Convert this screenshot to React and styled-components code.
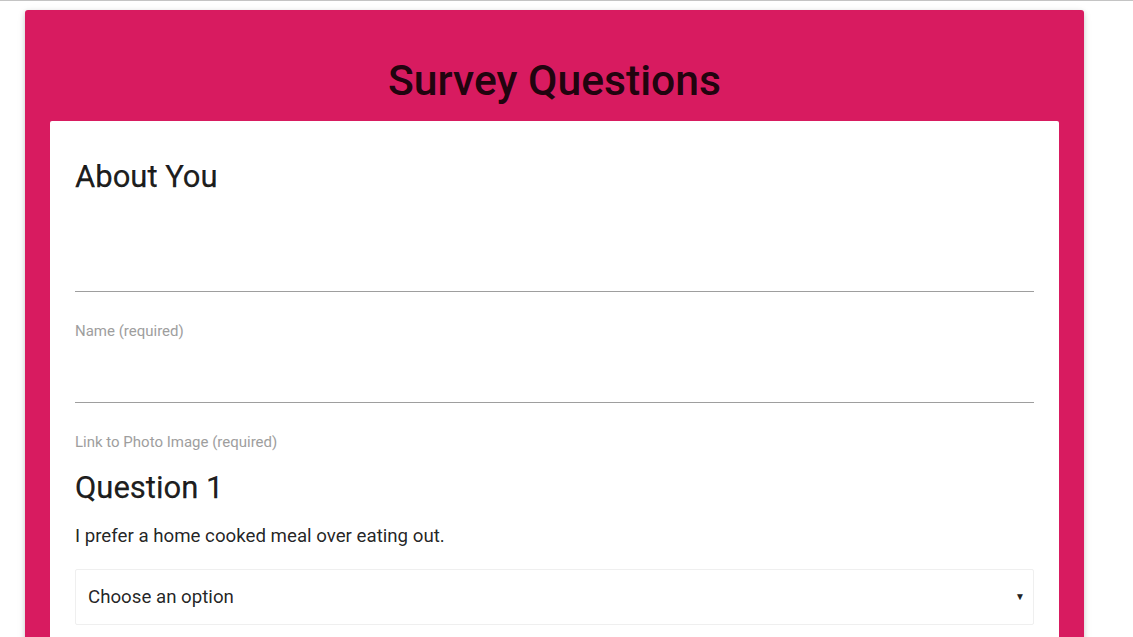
import React from "react";
import styled, { createGlobalStyle } from "styled-components";

const Global = createGlobalStyle`
  html, body { margin: 0; padding: 0; background: #fff; }
  body { font-family: Roboto, "Noto Sans", "Liberation Sans", sans-serif; color: rgba(0,0,0,0.87); }
  * { box-sizing: border-box; }
`;

const TopRule = styled.div`
  height: 1px;
  background: #c4c4c4;
`;

const Page = styled.main`
  padding: 9px 0 0 25px;
`;

const Banner = styled.section`
  width: 1059px;
  background: #d81b60;
  border-radius: 3px;
  box-shadow: 0 2px 5px rgba(0,0,0,0.16), 0 2px 10px rgba(0,0,0,0.08);
  padding: 46px 25px 0;
  min-height: 640px;
`;

const Title = styled.h1`
  margin: 0 0 17px;
  text-align: center;
  font-size: 42.7px;
  line-height: 48px;
  font-weight: 500;
  color: rgba(0,0,0,0.87);
`;

const Card = styled.div`
  background: #fff;
  border-radius: 2px;
  padding: 38px 25px 25px;
  min-height: 520px;
`;

const Heading = styled.h2`
  margin: ${p => p.$top || 0}px 0 0;
  font-size: 31px;
  line-height: 36px;
  font-weight: 400;
  color: rgba(0,0,0,0.9);
  -webkit-text-stroke: 0.25px rgba(0,0,0,0.9);
`;

const Field = styled.div`
  display: flex;
  flex-direction: column;
  margin-top: ${p => p.$top || 0}px;
  padding-bottom: 14px;
`;

const Input = styled.input`
  height: 48px;
  border: none;
  border-bottom: 1px solid #9e9e9e;
  background: transparent;
  outline: none;
  font: inherit;
  font-size: 16px;
  padding: 0;
`;

const Label = styled.label`
  margin-top: 29px;
  font-size: 15px;
  line-height: 20px;
  color: #9e9e9e;
`;

const Prompt = styled.p`
  margin: 18px 0 0;
  font-size: 18.7px;
  line-height: 24px;
  color: rgba(0,0,0,0.87);
`;

const SelectWrap = styled.div`
  position: relative;
  margin-top: 21px;
`;

const Select = styled.select`
  appearance: none;
  -webkit-appearance: none;
  width: 100%;
  height: 56px;
  border: 1px solid #efefef;
  border-radius: 2px;
  background: #fff;
  padding: 0 30px 0 12px;
  font-family: Roboto, "Noto Sans", "Liberation Sans", sans-serif;
  font-size: 18.7px;
  color: rgba(0,0,0,0.87);
  outline: none;
`;

const Arrow = styled.span`
  position: absolute;
  right: 9px;
  top: 50%;
  transform: translateY(-50%);
  font-size: 10px;
  line-height: 1;
  color: #222;
  pointer-events: none;
`;

export default function App() {
  return (
    <>
      <Global />
      <TopRule />
      <Page>
        <Banner>
          <Title>Survey Questions</Title>
          <Card>
            <Heading>About You</Heading>
            <Field $top={49}>
              <Input id="name" type="text" />
              <Label htmlFor="name">Name (required)</Label>
            </Field>
            <Field>
              <Input id="photo" type="text" />
              <Label htmlFor="photo">Link to Photo Image (required)</Label>
            </Field>
            <Heading $top={4}>Question 1</Heading>
            <Prompt>I prefer a home cooked meal over eating out.</Prompt>
            <SelectWrap>
              <Select defaultValue="">
                <option value="" disabled>Choose an option</option>
                <option value="1">1 (Strongly Disagree)</option>
                <option value="2">2</option>
                <option value="3">3</option>
                <option value="4">4</option>
                <option value="5">5 (Strongly Agree)</option>
              </Select>
              <Arrow>▼</Arrow>
            </SelectWrap>
          </Card>
        </Banner>
      </Page>
    </>
  );
}
